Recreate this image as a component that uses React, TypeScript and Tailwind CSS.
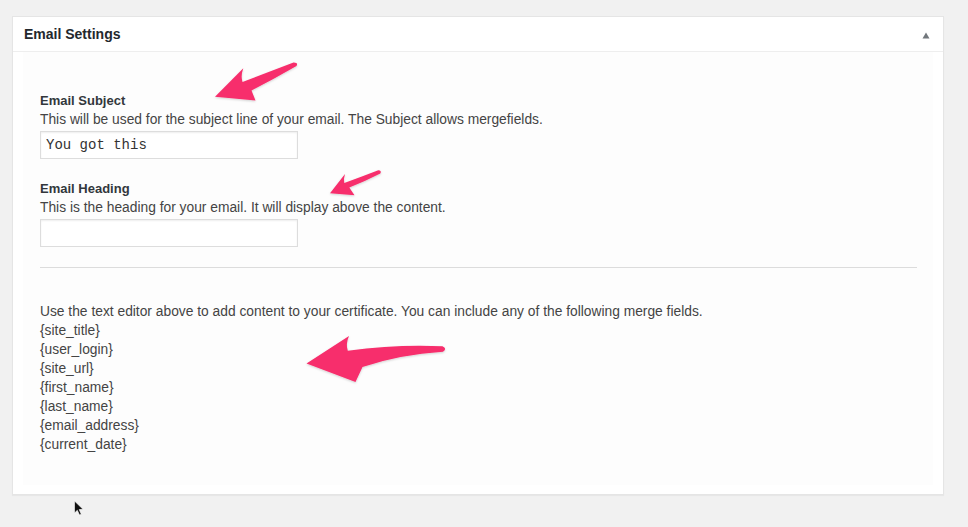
import React from "react";

const mergeFields = [
  "{site_title}",
  "{user_login}",
  "{site_url}",
  "{first_name}",
  "{last_name}",
  "{email_address}",
  "{current_date}",
];

function Field({ label, help, value }: { label: string; help: string; value?: string }) {
  return (
    <div>
      <div className="text-[13px] font-bold text-[#32373c]">{label}</div>
      <div>{help}</div>
      <input
        readOnly
        value={value ?? ""}
        className="mt-[2px] block h-[28px] w-[258px] border border-[#dddddd] bg-white px-[5px] font-['Liberation_Mono',monospace] text-[14px] text-[#333] shadow-[inset_0_1px_2px_rgba(0,0,0,0.07)] outline-none"
      />
    </div>
  );
}

export default function App() {
  return (
    <div className="relative h-[527px] w-[968px] overflow-hidden bg-[#f1f1f1] pt-4 pl-3 font-['Liberation_Sans',Arial,sans-serif] text-[13.8px] leading-[19px] text-[#444]">
      <div className="w-[932px] border border-[#e5e5e5] bg-white shadow-[0_1px_1px_rgba(0,0,0,0.04)]">
        {/* header */}
        <div className="flex h-[35px] items-center justify-between border-b border-[#eeeeee] px-[11px]">
          <h2 className="text-[14px] font-bold text-[#23282d]">Email Settings</h2>
          <svg width="8" height="7" viewBox="0 0 8 7" className="mr-[2px] mt-[2px]">
            <path d="M4 0.5 L7.5 6.5 L0.5 6.5 Z" fill="#72777c" />
          </svg>
        </div>

        {/* body */}
        <div className="px-[10px] pb-[9px]">
          <div className="bg-[#fdfdfd] pt-[39px] pr-[16px] pb-[31px] pl-[17px]">
            <Field
              label="Email Subject"
              help="This will be used for the subject line of your email. The Subject allows mergefields."
              value="You got this"
            />
            <div className="mt-[20px]">
              <Field
                label="Email Heading"
                help="This is the heading for your email. It will display above the content."
              />
            </div>
            <hr className="mt-[20px] border-t border-[#dcdcdc]" />
            <div className="mt-[34px]">
              <div>
                Use the text editor above to add content to your certificate. You can include any of the following merge fields.
              </div>
              {mergeFields.map((f) => (
                <div key={f}>{f}</div>
              ))}
            </div>
          </div>
        </div>
      </div>

      {/* annotation arrows */}
      <svg className="pointer-events-none absolute inset-0" width="968" height="527" viewBox="0 0 968 527">
        <defs>
          <filter id="sh" x="-20%" y="-20%" width="140%" height="140%">
            <feDropShadow dx="0" dy="1" stdDeviation="1.2" floodColor="#000" floodOpacity="0.18" />
          </filter>
        </defs>
        <g fill="#f72e6c" filter="url(#sh)">
          <path d="M215,96.7 L243.3,68.3 Q240.5,76 242.5,82 Q269,72 293.5,62.6 Q298.5,62.5 296.5,66 Q273,79.5 251.5,90.5 L255.5,100.5 Z" />
          <path d="M330,193.3 L345,174 Q343.3,179 344.3,183 Q361,177 378.3,170.3 Q382,170.6 380.3,173.6 Q364,182 349.3,187.6 L354.5,195.3 Z" />
          <path d="M306.5,363.5 L349,336 Q345.5,344 347.8,350.8 Q398,344 442.5,346.3 Q447.5,348.5 443,351.8 Q400,354.5 362.5,367 L355.5,382 Z" />
        </g>
        {/* mouse pointer */}
        <path d="M74.5,501 L74.5,513 L77.3,510.3 L79.5,515 L81.3,514.2 L79.2,509.6 L83,509.3 Z" fill="#111" stroke="#fff" strokeWidth="0.6" />
      </svg>
    </div>
  );
}
